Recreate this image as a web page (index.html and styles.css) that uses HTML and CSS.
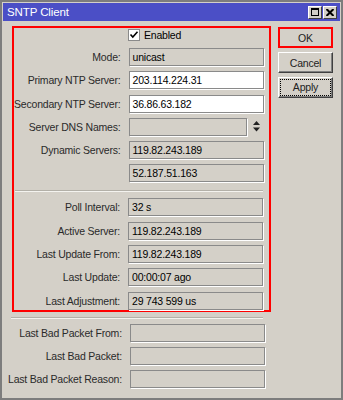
FILE: index.html
```html
<!DOCTYPE html>
<html lang="en">
  <head>
    <meta charset="utf-8">
    <meta name="viewport" content="width=device-width">
    <title>SNTP Client</title>
    <link rel="stylesheet" href="styles.css">
  </head>
  <body>
    <div class="window">
      <div class="titlebar">
        <span class="title">SNTP Client</span>
        <div class="title-btns">
          <span class="tbtn">
            <svg width="8" height="8" viewBox="0 0 8 8"><rect x="0.5" y="0.5" width="7" height="7" fill="none" stroke="#000"/><rect x="0" y="0" width="8" height="2" fill="#000"/></svg>
          </span>
          <span class="tbtn">
            <svg width="8" height="7" viewBox="0 0 8 7"><path d="M0.5 0 L7.5 7 M7.5 0 L0.5 7" stroke="#000" stroke-width="2"/></svg>
          </span>
        </div>
      </div>

      <div class="content">
        <form class="form">
          <div class="marked">
            <div class="rows">
              <span></span>
              <label class="check">
                <span class="box">
                  <svg width="10" height="10" viewBox="0 0 10 10"><path d="M1.5 4.5 L3.8 7 L8.5 1.8" fill="none" stroke="#000" stroke-width="1.6"/></svg>
                </span>
                Enabled
              </label>
            </div>
            <div class="rows first">
              <span class="lbl">Mode:</span>
              <div class="field">unicast</div>
              <span class="lbl">Primary NTP Server:</span>
              <div class="field edit">203.114.224.31</div>
              <span class="lbl">Secondary NTP Server:</span>
              <div class="field edit">36.86.63.182</div>
              <span class="lbl">Server DNS Names:</span>
              <div class="combo">
                <div class="field"></div>
                <svg class="spin" width="7" height="11" viewBox="0 0 7 11"><path d="M3.5 0 L7 4 L0 4 Z M0 6.5 L7 6.5 L3.5 10.5 Z" fill="#222"/></svg>
              </div>
              <span class="lbl">Dynamic Servers:</span>
              <div class="field">119.82.243.189</div>
              <span></span>
              <div class="field">52.187.51.163</div>
            </div>
            <hr class="sep inner">
            <div class="rows">
              <span class="lbl">Poll Interval:</span>
              <div class="field">32 s</div>
              <span class="lbl">Active Server:</span>
              <div class="field">119.82.243.189</div>
              <span class="lbl">Last Update From:</span>
              <div class="field">119.82.243.189</div>
              <span class="lbl">Last Update:</span>
              <div class="field">00:00:07 ago</div>
              <span class="lbl">Last Adjustment:</span>
              <div class="field">29 743 599 us</div>
            </div>
          </div>
          <hr class="sep outer">
          <div class="rows outside">
            <span class="lbl">Last Bad Packet From:</span>
            <div class="field"></div>
            <span class="lbl">Last Bad Packet:</span>
            <div class="field"></div>
            <span class="lbl">Last Bad Packet Reason:</span>
            <div class="field"></div>
          </div>
        </form>

        <div class="actions">
          <button class="btn btn-ok" type="button">OK</button>
          <button class="btn" type="button">Cancel</button>
          <button class="btn btn-focus" type="button"><span>Apply</span></button>
        </div>
      </div>
    </div>
  </body>
</html>
```

FILE: styles.css
```css
html, body {
    margin: 0;
    padding: 0;
    background: #d4d0c8;
}
body {
    font-family: "Liberation Sans", Arial, sans-serif;
    font-size: 10.5px;
    letter-spacing: -0.2px;
    color: #2a2a2a;
}
.window {
    box-sizing: border-box;
    width: 343px;
    height: 400px;
    border: 2px solid #7d7d7d;
    padding: 1px;
    background: #d4d0c8;
}

/* title bar */
.titlebar {
    display: flex;
    align-items: center;
    justify-content: space-between;
    height: 18px;
    padding: 0 3px 0 4px;
    background: #4b4fc6;
}
.title {
    color: #fff;
    font-size: 11.5px;
    letter-spacing: -0.1px;
}
.title-btns {
    display: flex;
    gap: 1px;
}
.tbtn {
    box-sizing: border-box;
    display: flex;
    align-items: center;
    justify-content: center;
    width: 14px;
    height: 13px;
    background: #d4d0c8;
    border: 1px solid;
    border-color: #fff #404040 #404040 #fff;
}

/* body */
.content {
    display: flex;
    gap: 7px;
    padding: 5px 7px 0 9px;
}
.form {
    width: 259px;
    margin: 0;
}
.marked {
    border: 2px solid #f00;
}
.rows {
    display: grid;
    grid-template-columns: 1fr 135px;
    column-gap: 8px;
    row-gap: 5.3px;
    align-items: center;
    padding-right: 6px;
}
.rows.first {
    margin-top: 7px;
}
.rows.outside {
    row-gap: 5px;
    margin-left: -4px;
    padding-right: 8px;
}
.lbl {
    text-align: right;
    white-space: nowrap;
}
.field {
    box-sizing: border-box;
    height: 18px;
    line-height: 16px;
    padding: 0 3px;
    border: 1px solid #8a8a8a;
    box-shadow: 1px 1px 0 #fff;
    background: #d4d0c8;
    color: #000;
    white-space: nowrap;
    overflow: hidden;
}
.field.edit {
    background: #fff;
}
.combo {
    display: flex;
    align-items: center;
}
.combo .field {
    width: 118px;
}
.spin {
    margin-left: 6px;
}

.check {
    display: flex;
    align-items: center;
    gap: 4px;
    height: 13px;
    color: #000;
}
.check .box {
    box-sizing: border-box;
    display: flex;
    align-items: center;
    justify-content: center;
    width: 12px;
    height: 12px;
    background: #fff;
    border: 1px solid #8a8a8a;
}

.sep {
    height: 0;
    border: 0;
    border-top: 1px solid #b3b0a8;
    border-bottom: 1px solid #f4f3ef;
}
.sep.inner {
    margin: 8px 6px 6px 1px;
}
.sep.outer {
    margin: 5px 8px 5px -1px;
}

/* buttons */
.actions {
    display: flex;
    flex-direction: column;
    gap: 4px;
    padding-top: 1px;
}
.btn {
    box-sizing: border-box;
    width: 55px;
    height: 21px;
    padding: 0;
    font-family: inherit;
    font-size: 10.5px;
    letter-spacing: -0.2px;
    color: #222;
    background: #d4d0c8;
    border: 1px solid;
    border-color: #fff #404040 #404040 #fff;
    box-shadow: inset -1px -1px 0 #808080;
}
.btn-ok {
    border: 2px solid #f00;
    box-shadow: none;
}
.btn-focus span {
    display: block;
    margin: 1px;
    line-height: 15px;
    border: 1px dotted #000;
}
```
